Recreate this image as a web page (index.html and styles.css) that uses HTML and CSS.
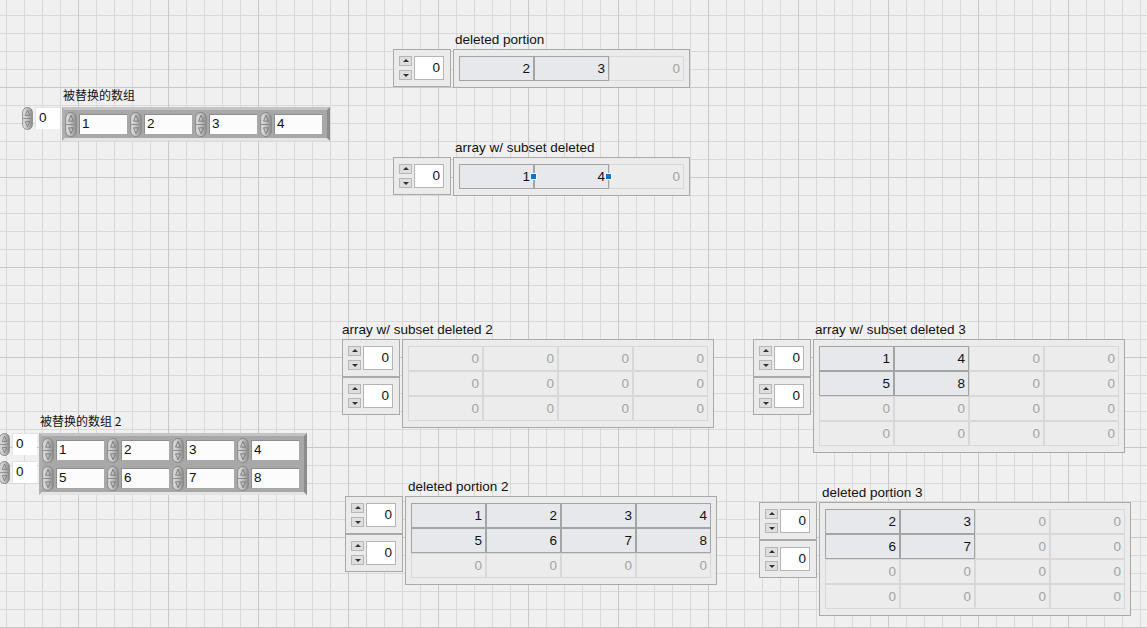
FILE: index.html
```html
<!DOCTYPE html>
<html lang="en">
<head>
    <meta charset="UTF-8">
    <title>Front Panel</title>
    <link rel="stylesheet" href="styles.css">
</head>
<body>
    <svg class="defs" width="0" height="0" aria-hidden="true">
        <defs>
            <linearGradient id="spinFill" x1="0" y1="0" x2="1" y2="0">
                <stop offset="0" stop-color="#e4e4e4"/>
                <stop offset="0.45" stop-color="#c4c4c4"/>
                <stop offset="1" stop-color="#8c8c8c"/>
            </linearGradient>
            <symbol id="spin" viewBox="0 0 12 26">
                <rect x="0.5" y="0.5" width="11" height="25" rx="5.5" fill="url(#spinFill)" stroke="#868686"/>
                <line x1="1" y1="13" x2="11" y2="13" stroke="#8a8a8a"/>
                <path d="M6 3.5 L8.6 9.5 L3.4 9.5 Z" fill="none" stroke="#6e6e6e" stroke-width="0.8"/>
                <path d="M3.4 16.5 L8.6 16.5 L6 22.5 Z" fill="none" stroke="#6e6e6e" stroke-width="0.8"/>
            </symbol>
        </defs>
    </svg>

    <div class="panel">

        <!-- 被替换的数组 -->
        <div class="ctl classic src-1">
            <div class="label cjk">被替换的数组</div>
            <div class="ctl-row">
                <div class="c-index">
                    <div class="c-idx"><svg class="spin"><use href="#spin"/></svg><span class="c-idx-val">0</span></div>
                </div>
                <div class="c-frame">
                    <div class="c-row">
                        <div class="c-elem"><svg class="spin big"><use href="#spin"/></svg><span class="c-val">1</span></div>
                        <div class="c-elem"><svg class="spin big"><use href="#spin"/></svg><span class="c-val">2</span></div>
                        <div class="c-elem"><svg class="spin big"><use href="#spin"/></svg><span class="c-val">3</span></div>
                        <div class="c-elem"><svg class="spin big"><use href="#spin"/></svg><span class="c-val">4</span></div>
                    </div>
                </div>
            </div>
        </div>

        <!-- 被替换的数组 2 -->
        <div class="ctl classic src-2">
            <div class="label cjk">被替换的数组 2</div>
            <div class="ctl-row">
                <div class="c-index">
                    <div class="c-idx"><svg class="spin"><use href="#spin"/></svg><span class="c-idx-val">0</span></div>
                    <div class="c-idx"><svg class="spin"><use href="#spin"/></svg><span class="c-idx-val">0</span></div>
                </div>
                <div class="c-frame">
                    <div class="c-row">
                        <div class="c-elem"><svg class="spin big"><use href="#spin"/></svg><span class="c-val">1</span></div>
                        <div class="c-elem"><svg class="spin big"><use href="#spin"/></svg><span class="c-val">2</span></div>
                        <div class="c-elem"><svg class="spin big"><use href="#spin"/></svg><span class="c-val">3</span></div>
                        <div class="c-elem"><svg class="spin big"><use href="#spin"/></svg><span class="c-val">4</span></div>
                    </div>
                    <div class="c-row">
                        <div class="c-elem"><svg class="spin big"><use href="#spin"/></svg><span class="c-val">5</span></div>
                        <div class="c-elem"><svg class="spin big"><use href="#spin"/></svg><span class="c-val">6</span></div>
                        <div class="c-elem"><svg class="spin big"><use href="#spin"/></svg><span class="c-val">7</span></div>
                        <div class="c-elem"><svg class="spin big"><use href="#spin"/></svg><span class="c-val">8</span></div>
                    </div>
                </div>
            </div>
        </div>

        <!-- deleted portion -->
        <div class="ctl dp-1">
            <div class="label">deleted portion</div>
            <div class="ctl-row">
                <div class="m-index">
                    <div class="m-idx"><div class="m-btns"><span class="m-btn up"></span><span class="m-btn down"></span></div><span class="m-val">0</span></div>
                </div>
                <div class="m-frame cols-3">
                    <div class="cell on">2</div>
                    <div class="cell on">3</div>
                    <div class="cell">0</div>
                </div>
            </div>
        </div>

        <!-- array w/ subset deleted -->
        <div class="ctl asd-1">
            <div class="label">array w/ subset deleted</div>
            <div class="ctl-row">
                <div class="m-index">
                    <div class="m-idx"><div class="m-btns"><span class="m-btn up"></span><span class="m-btn down"></span></div><span class="m-val">0</span></div>
                </div>
                <div class="m-frame cols-3">
                    <div class="cell on">1<span class="mark"></span></div>
                    <div class="cell on">4<span class="mark"></span></div>
                    <div class="cell">0</div>
                </div>
            </div>
        </div>

        <!-- array w/ subset deleted 2 -->
        <div class="ctl asd-2">
            <div class="label">array w/ subset deleted 2</div>
            <div class="ctl-row">
                <div class="m-index">
                    <div class="m-idx"><div class="m-btns"><span class="m-btn up"></span><span class="m-btn down"></span></div><span class="m-val">0</span></div>
                    <div class="m-idx"><div class="m-btns"><span class="m-btn up"></span><span class="m-btn down"></span></div><span class="m-val">0</span></div>
                </div>
                <div class="m-frame cols-4">
                    <div class="cell">0</div><div class="cell">0</div><div class="cell">0</div><div class="cell">0</div>
                    <div class="cell">0</div><div class="cell">0</div><div class="cell">0</div><div class="cell">0</div>
                    <div class="cell">0</div><div class="cell">0</div><div class="cell">0</div><div class="cell">0</div>
                </div>
            </div>
        </div>

        <!-- array w/ subset deleted 3 -->
        <div class="ctl asd-3">
            <div class="label">array w/ subset deleted 3</div>
            <div class="ctl-row">
                <div class="m-index">
                    <div class="m-idx"><div class="m-btns"><span class="m-btn up"></span><span class="m-btn down"></span></div><span class="m-val">0</span></div>
                    <div class="m-idx"><div class="m-btns"><span class="m-btn up"></span><span class="m-btn down"></span></div><span class="m-val">0</span></div>
                </div>
                <div class="m-frame cols-4">
                    <div class="cell on">1</div><div class="cell on">4</div><div class="cell">0</div><div class="cell">0</div>
                    <div class="cell on">5</div><div class="cell on">8</div><div class="cell">0</div><div class="cell">0</div>
                    <div class="cell">0</div><div class="cell">0</div><div class="cell">0</div><div class="cell">0</div>
                    <div class="cell">0</div><div class="cell">0</div><div class="cell">0</div><div class="cell">0</div>
                </div>
            </div>
        </div>

        <!-- deleted portion 2 -->
        <div class="ctl dp-2">
            <div class="label">deleted portion 2</div>
            <div class="ctl-row">
                <div class="m-index">
                    <div class="m-idx"><div class="m-btns"><span class="m-btn up"></span><span class="m-btn down"></span></div><span class="m-val">0</span></div>
                    <div class="m-idx"><div class="m-btns"><span class="m-btn up"></span><span class="m-btn down"></span></div><span class="m-val">0</span></div>
                </div>
                <div class="m-frame cols-4">
                    <div class="cell on">1</div><div class="cell on">2</div><div class="cell on">3</div><div class="cell on">4</div>
                    <div class="cell on">5</div><div class="cell on">6</div><div class="cell on">7</div><div class="cell on">8</div>
                    <div class="cell">0</div><div class="cell">0</div><div class="cell">0</div><div class="cell">0</div>
                </div>
            </div>
        </div>

        <!-- deleted portion 3 -->
        <div class="ctl dp-3">
            <div class="label">deleted portion 3</div>
            <div class="ctl-row">
                <div class="m-index">
                    <div class="m-idx"><div class="m-btns"><span class="m-btn up"></span><span class="m-btn down"></span></div><span class="m-val">0</span></div>
                    <div class="m-idx"><div class="m-btns"><span class="m-btn up"></span><span class="m-btn down"></span></div><span class="m-val">0</span></div>
                </div>
                <div class="m-frame cols-4">
                    <div class="cell on">2</div><div class="cell on">3</div><div class="cell">0</div><div class="cell">0</div>
                    <div class="cell on">6</div><div class="cell on">7</div><div class="cell">0</div><div class="cell">0</div>
                    <div class="cell">0</div><div class="cell">0</div><div class="cell">0</div><div class="cell">0</div>
                    <div class="cell">0</div><div class="cell">0</div><div class="cell">0</div><div class="cell">0</div>
                </div>
            </div>
        </div>

    </div>
</body>
</html>
```

FILE: styles.css
```css
html, body {
    margin: 0;
    padding: 0;
}

body {
    width: 1147px;
    height: 628px;
    overflow: hidden;
    font-family: "Liberation Sans", Arial, sans-serif;
    font-size: 13.5px;
    color: #111;
}

.defs {
    position: absolute;
    width: 0;
    height: 0;
}

/* front panel grid */
.panel {
    position: relative;
    width: 1147px;
    height: 628px;
    background-color: #f0f0f0;
    background-image:
        linear-gradient(to right, #c8c8c8 1px, transparent 1px),
        linear-gradient(to bottom, #c8c8c8 1px, transparent 1px),
        linear-gradient(to right, #d9d9d9 1px, transparent 1px),
        linear-gradient(to bottom, #d9d9d9 1px, transparent 1px);
    background-size: 90px 90px, 90px 90px, 18px 18px, 18px 18px;
    background-position: 78px 0, 0 87px, 6px 0, 0 15px;
}

/* controls sit on the panel at their own spot */
.ctl {
    position: absolute;
}

.src-1 { left: 22px; top: 87px; }
.src-2 { left: -1px; top: 413px; }
.dp-1  { left: 393px; top: 32px; }
.asd-1 { left: 393px; top: 140px; }
.asd-2 { left: 342px; top: 322px; }
.asd-3 { left: 753px; top: 322px; }
.dp-2  { left: 345px; top: 479px; }
.dp-3  { left: 759px; top: 485px; }

.label {
    height: 16px;
    line-height: 16px;
    margin-bottom: 1px;
    white-space: nowrap;
    color: #111;
}

.dp-1 .label, .asd-1 .label, .asd-3 .label { margin-left: 62px; }
.dp-2 .label, .dp-3 .label { margin-left: 63px; }

.label.cjk {
    font-family: "Noto Sans CJK SC", "Liberation Sans", sans-serif;
    font-size: 12px;
    margin-bottom: 4px;
}
.src-1 .label { margin-left: 41px; }
.src-2 .label { margin-left: 41px; }

.ctl-row {
    display: flex;
    align-items: flex-start;
    gap: 2px;
}

/* classic (3D) array */
.spin {
    display: block;
    width: 11px;
    height: 23px;
    flex: none;
}

.spin.big {
    width: 12px;
    height: 25px;
}

.c-index {
    display: flex;
    flex-direction: column;
}

.c-idx {
    display: flex;
    align-items: flex-start;
    gap: 2px;
    height: 28px;
}

.c-idx-val {
    width: 25px;
    height: 22px;
    line-height: 22px;
    padding-left: 4px;
    box-sizing: border-box;
    background: #fff;
    box-shadow: inset 1px 1px 0 #e2e2e2;
}

.c-frame {
    background: #a8a8a8;
    border-style: solid;
    border-width: 3px;
    border-color: #c4c4c4 #8c8c8c #e4e4e4 #b0b0b0;
    padding-right: 2px;
}

.c-row {
    display: flex;
    align-items: center;
    height: 28px;
}

.c-elem {
    display: flex;
    align-items: center;
    gap: 2px;
    margin-right: 3px;
}

.c-val {
    width: 48px;
    height: 20px;
    line-height: 20px;
    padding-left: 3px;
    box-sizing: border-box;
    background: #fcfcfc;
    box-shadow: inset 1px 1px 0 #8e8e8e;
}

/* silver array */
.m-index {
    display: flex;
    flex-direction: column;
}

.m-idx {
    display: flex;
    gap: 2px;
    width: 58px;
    height: 38px;
    box-sizing: border-box;
    padding: 6px 5px;
    border: 1px solid #a9a9a9;
    background: #ebebeb;
}

.m-btns {
    display: flex;
    flex-direction: column;
    justify-content: space-between;
    height: 24px;
}

.m-btn {
    position: relative;
    width: 13px;
    height: 10px;
    box-sizing: border-box;
    border: 1px solid #b6b6b6;
    background: #dedede;
}

.m-btn::after {
    content: "";
    position: absolute;
    left: 3px;
    top: 2px;
    border-left: 3px solid transparent;
    border-right: 3px solid transparent;
}

.m-btn.up::after {
    border-bottom: 3px solid #333;
}

.m-btn.down::after {
    top: 3px;
    border-top: 3px solid #333;
}

.m-val {
    width: 30px;
    height: 24px;
    line-height: 22px;
    box-sizing: border-box;
    padding-right: 3px;
    text-align: right;
    background: #fff;
    border: 1px solid #b4b4b4;
}

.m-frame {
    display: grid;
    grid-auto-rows: 25px;
    padding: 6px 5px;
    border: 1px solid #a9a9a9;
    background: #ebebeb;
}

.cols-3 { grid-template-columns: repeat(3, 75px); }
.cols-4 { grid-template-columns: repeat(4, 75px); }

.cell {
    position: relative;
    box-sizing: border-box;
    border: 1px solid #d8d8d8;
    background: #ececec;
    color: #a3a3a3;
    text-align: right;
    padding-right: 3px;
    line-height: 23px;
}

.cell.on {
    border-color: #a4a4a4;
    background: #e6e8eb;
    color: #111;
}

.mark {
    position: absolute;
    right: -4px;
    top: 8px;
    width: 7px;
    height: 7px;
    background: #0a74d0;
    border: 1px solid #f4f8fc;
    box-sizing: border-box;
    z-index: 1;
}
```
